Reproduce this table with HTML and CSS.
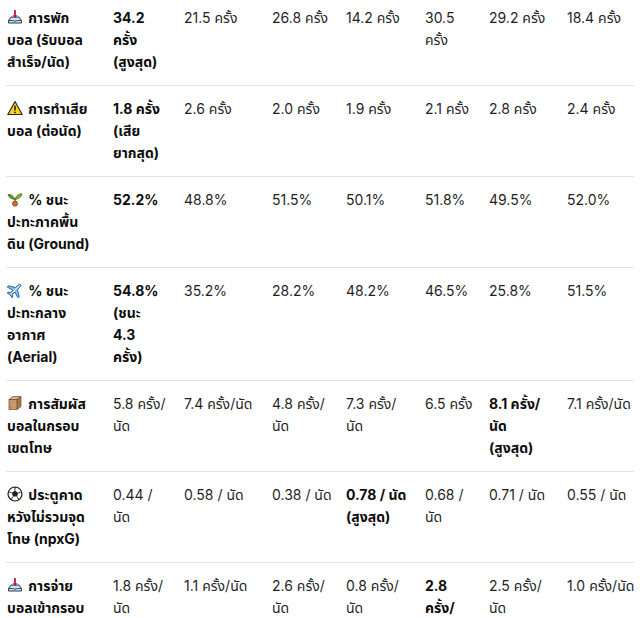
FILE: index.html
```html
<!DOCTYPE html>
<html lang="th">
<head>
<meta charset="utf-8">
<title>สถิติ</title>
<link rel="stylesheet" href="styles.css">
</head>
<body>
<div class="wrap">
<table class="stats">
<colgroup>
<col class="c1"><col class="c2"><col class="c3"><col class="c4"><col class="c5"><col class="c6"><col class="c7"><col class="c8">
</colgroup>
<tbody>
<tr>
<td class="label"><svg class="ico" viewBox="0 0 16 16"><path d="M1.5 11.5 L4 8 H12 L14.5 11.5 V14 H1.5 Z" fill="#bfe3f5" stroke="#2f3b4a" stroke-width="1"/><path d="M1.5 11.5 H5.5 Q8 13 10.5 11.5 H14.5" fill="none" stroke="#2f3b4a" stroke-width="0.9"/><rect x="7.1" y="1" width="1.8" height="6" fill="#b0233b"/><path d="M5.6 6.2 H10.4 L8 9.2 Z" fill="#b0233b"/></svg> การพัก<br>บอล (รับบอล<br>สำเร็จ/นัด)</td>
<td class="best">34.2<br>ครั้ง<br>(สูงสุด)</td>
<td>21.5 ครั้ง</td>
<td>26.8 ครั้ง</td>
<td>14.2 ครั้ง</td>
<td>30.5<br>ครั้ง</td>
<td>29.2 ครั้ง</td>
<td>18.4 ครั้ง</td>
</tr>
<tr>
<td class="label"><svg class="ico" viewBox="0 0 16 16"><path d="M8 1.5 L15.2 14.5 H0.8 Z" fill="#f7d417" stroke="#222" stroke-width="1.1" stroke-linejoin="round"/><rect x="7.2" y="5.5" width="1.6" height="5" rx="0.6" fill="#222"/><circle cx="8" cy="12.4" r="0.9" fill="#222"/></svg> การทำเสีย<br>บอล (ต่อนัด)</td>
<td class="best">1.8 ครั้ง<br>(เสีย<br>ยากสุด)</td>
<td>2.6 ครั้ง</td>
<td>2.0 ครั้ง</td>
<td>1.9 ครั้ง</td>
<td>2.1 ครั้ง</td>
<td>2.8 ครั้ง</td>
<td>2.4 ครั้ง</td>
</tr>
<tr>
<td class="label"><svg class="ico" viewBox="0 0 16 16"><path d="M8 9 C7 5 4 3 1 3.5 C1.5 6.5 4.5 8 8 8.5 Z" fill="#6a9a1f" stroke="#3c5a10" stroke-width="0.7"/><path d="M8 8.5 C9 4.5 12 2.5 15 3 C14.5 6 11.5 8 8 8.5 Z" fill="#7cb32a" stroke="#3c5a10" stroke-width="0.7"/><rect x="7.4" y="8" width="1.2" height="3" fill="#4f7a18"/><circle cx="8" cy="12.6" r="2.6" fill="#c9712f" stroke="#7a3d14" stroke-width="0.7"/></svg> % ชนะ<br>ปะทะภาคพื้น<br>ดิน (Ground)</td>
<td class="best">52.2%</td>
<td>48.8%</td>
<td>51.5%</td>
<td>50.1%</td>
<td>51.8%</td>
<td>49.5%</td>
<td>52.0%</td>
</tr>
<tr>
<td class="label"><svg class="ico" viewBox="0 0 16 16"><g transform="rotate(45 8 8)"><path d="M8 0.3 C9.1 0.3 9.4 1.6 9.4 2.8 V6 L15.6 9.6 V11.4 L9.4 9.6 V12.9 L11.4 14.4 V15.6 L8 14.8 L4.6 15.6 V14.4 L6.6 12.9 V9.6 L0.4 11.4 V9.6 L6.6 6 V2.8 C6.6 1.6 6.9 0.3 8 0.3 Z" fill="#8cc4ee" stroke="#1f5f99" stroke-width="0.9" stroke-linejoin="round"/><path d="M8 1.6 V13" stroke="#ffffff" stroke-width="0.9"/></g></svg> % ชนะ<br>ปะทะกลาง<br>อากาศ<br>(Aerial)</td>
<td class="best">54.8%<br>(ชนะ<br>4.3<br>ครั้ง)</td>
<td>35.2%</td>
<td>28.2%</td>
<td>48.2%</td>
<td>46.5%</td>
<td>25.8%</td>
<td>51.5%</td>
</tr>
<tr>
<td class="label"><svg class="ico" viewBox="0 0 16 16"><path d="M2 4.5 L6 1.5 H14 L10 4.5 Z" fill="#d9b58a" stroke="#6b4a2a" stroke-width="0.7"/><path d="M10 4.5 L14 1.5 V11.5 L10 14.5 Z" fill="#a9794a" stroke="#6b4a2a" stroke-width="0.7"/><rect x="2" y="4.5" width="8" height="10" fill="#c8996a" stroke="#6b4a2a" stroke-width="0.7"/><circle cx="3.6" cy="12.8" r="0.7" fill="#d63c4a"/></svg> การสัมผัส<br>บอลในกรอบ<br>เขตโทษ</td>
<td>5.8 ครั้ง/<br>นัด</td>
<td>7.4 ครั้ง/นัด</td>
<td>4.8 ครั้ง/<br>นัด</td>
<td>7.3 ครั้ง/<br>นัด</td>
<td>6.5 ครั้ง</td>
<td class="best">8.1 ครั้ง/<br>นัด<br>(สูงสุด)</td>
<td>7.1 ครั้ง/นัด</td>
</tr>
<tr>
<td class="label"><svg class="ico" viewBox="0 0 16 16"><circle cx="8" cy="8" r="7" fill="#fff" stroke="#222" stroke-width="1.2"/><path d="M8 4.6 L11.2 6.9 L10 10.6 H6 L4.8 6.9 Z" fill="#222"/><path d="M8 4.6 V2 M11.2 6.9 L13.8 6 M10 10.6 L11.6 13 M6 10.6 L4.4 13 M4.8 6.9 L2.2 6" stroke="#222" stroke-width="0.9"/><path d="M6 1.3 L8 2.3 L10 1.3 Z M14.6 5.2 L13.6 6.2 L14.9 8.6 Z M1.4 5.2 L2.4 6.2 L1.1 8.6 Z M10.2 14.7 L11.6 12.8 L13.3 13 Z M5.8 14.7 L4.4 12.8 L2.7 13 Z" fill="#222"/></svg> ประตูคาด<br>หวังไม่รวมจุด<br>โทษ (npxG)</td>
<td>0.44 /<br>นัด</td>
<td>0.58 / นัด</td>
<td>0.38 / นัด</td>
<td class="best">0.78 / นัด<br>(สูงสุด)</td>
<td>0.68 /<br>นัด</td>
<td>0.71 / นัด</td>
<td>0.55 / นัด</td>
</tr>
<tr>
<td class="label"><svg class="ico" viewBox="0 0 16 16"><path d="M1.5 11.5 L4 8 H12 L14.5 11.5 V14 H1.5 Z" fill="#bfe3f5" stroke="#2f3b4a" stroke-width="1"/><path d="M1.5 11.5 H5.5 Q8 13 10.5 11.5 H14.5" fill="none" stroke="#2f3b4a" stroke-width="0.9"/><rect x="7.1" y="1" width="1.8" height="6" fill="#b0233b"/><path d="M5.6 6.2 H10.4 L8 9.2 Z" fill="#b0233b"/></svg> การจ่าย<br>บอลเข้ากรอบ<br>เขตโทษ</td>
<td>1.8 ครั้ง/<br>นัด</td>
<td>1.1 ครั้ง/นัด</td>
<td>2.6 ครั้ง/<br>นัด</td>
<td>0.8 ครั้ง/<br>นัด</td>
<td class="best">2.8<br>ครั้ง/<br>นัด<br>(สูงสุด)</td>
<td>2.5 ครั้ง/<br>นัด</td>
<td>1.0 ครั้ง/นัด</td>
</tr>
</tbody>
</table>
</div>
</body>
</html>
```

FILE: styles.css
```css
html, body {
  margin: 0;
  padding: 0;
  background: #ffffff;
}
body {
  font-family: Inter, "Noto Sans", "Noto Sans Thai", sans-serif;
  font-size: 14px;
  line-height: 22px;
  color: #1f1f1f;
  overflow: hidden;
}
.wrap {
  margin: -5px 6px 0;
}
.stats {
  width: 628px;
  table-layout: fixed;
  border-collapse: collapse;
}
.c1 { width: 106px; }
.c2 { width: 71px; }
.c3 { width: 88px; }
.c4 { width: 74px; }
.c5 { width: 79px; }
.c6 { width: 64px; }
.c7 { width: 78px; }
.c8 { width: 68px; }
.stats tr {
  border-bottom: 1px solid #e3e3e3;
}
.stats td {
  vertical-align: top;
  padding: 12px 4px 12px 1px;
  white-space: nowrap;
}
.label, .best {
  font-weight: 700;
  color: #0d0d0d;
}
.ico {
  display: inline-block;
  width: 16px;
  height: 16px;
  vertical-align: -2px;
  margin-right: 2px;
}
```
